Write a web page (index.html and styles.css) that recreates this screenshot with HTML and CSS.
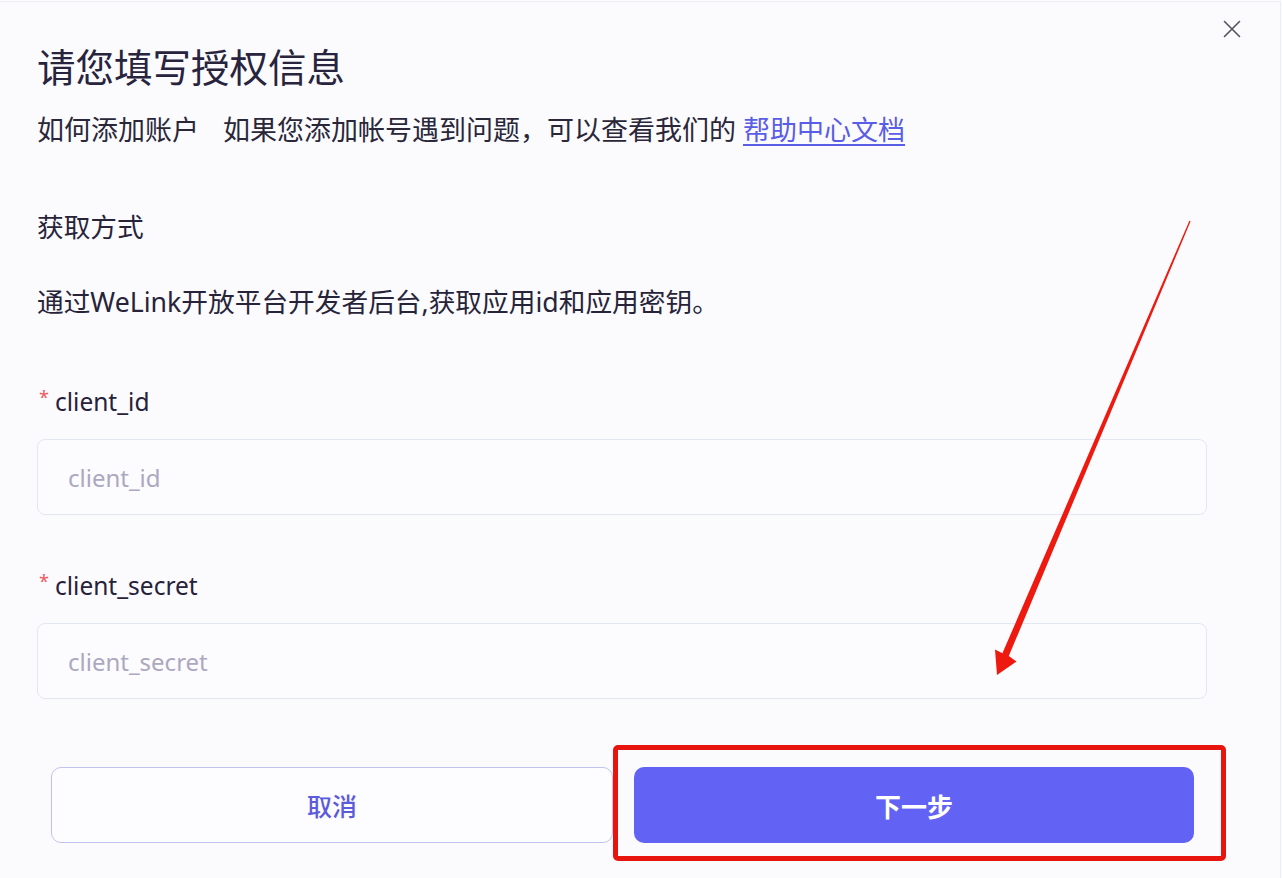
FILE: index.html
```html
<!DOCTYPE html>
<html lang="zh-CN">
<head>
<meta charset="utf-8">
<title>请您填写授权信息</title>
<link rel="stylesheet" href="styles.css">
</head>
<body>
<div class="dialog">
  <button class="close" aria-label="关闭">
    <svg width="18" height="18" viewBox="0 0 18 18"><path d="M1.5 1.5 L16.5 16.5 M16.5 1.5 L1.5 16.5" stroke="#55525f" stroke-width="1.6" fill="none" stroke-linecap="round"/></svg>
  </button>
  <h1 class="title">请您填写授权信息</h1>
  <p class="subtitle"><span class="howto">如何添加账户</span><span>如果您添加帐号遇到问题，可以查看我们的 <a class="link" href="#">帮助中心文档</a></span></p>
  <p class="section">获取方式</p>
  <p class="desc">通过WeLink开放平台开发者后台,获取应用id和应用密钥。</p>
  <form class="form">
    <div class="field">
      <label class="label"><span class="req">*</span>client_id</label>
      <input class="input" type="text" placeholder="client_id">
    </div>
    <div class="field">
      <label class="label"><span class="req">*</span>client_secret</label>
      <input class="input" type="text" placeholder="client_secret">
    </div>
    <div class="actions">
      <button type="button" class="btn cancel">取消</button>
      <button type="button" class="btn primary">下一步</button>
    </div>
  </form>
</div>
<div class="highlight"></div>
<svg class="arrow" width="1282" height="878" viewBox="0 0 1282 878">
  <polygon points="1190.6,221.3 1008.8,656.1 1016.5,661.5 997,675 995,649.5 1002.4,653.3 1189.4,220.7" fill="#ee1a10"/>
</svg>
</body>
</html>
```

FILE: styles.css
```css
* { box-sizing: border-box; }
html, body { margin: 0; padding: 0; }
body {
  width: 1282px;
  height: 878px;
  background: #fbfbfe;
  font-family: "Noto Sans", "Noto Sans CJK SC", sans-serif;
  color: #27243a;
  overflow: hidden;
  position: relative;
}
.dialog {
  position: relative;
  height: 878px;
  padding: 0 73px 0 37px;
  border-top: 1px solid #eceef3;
  border-right: 1px solid #eceef3;
  margin-top: 1px;
  margin-right: 1px;
}
.close {
  position: absolute;
  top: 16px;
  right: 37px;
  width: 22px;
  height: 22px;
  padding: 2px;
  border: 0;
  background: transparent;
  display: flex;
  align-items: center;
  justify-content: center;
}
.title {
  margin: 40px 0 0;
  font-size: 38.5px;
  line-height: 50px;
  font-weight: 400;
  color: #28243d;
}
.subtitle {
  margin: 18px 0 0;
  font-size: 27px;
  line-height: 40px;
  color: #2a2739;
}
.howto { margin-right: 24px; }
.link {
  color: #5a5de6;
  text-decoration: underline;
  text-underline-offset: 4px;
  text-decoration-thickness: 1.5px;
}
.section {
  margin: 57px 0 0;
  font-size: 26.7px;
  line-height: 40px;
}
.desc {
  margin: 35px 0 0;
  font-size: 26.7px;
  line-height: 40px;
}
.form {
  display: flex;
  flex-direction: column;
  margin-top: 60px;
}
.field {
  display: flex;
  flex-direction: column;
  gap: 17px;
}
.field + .field { margin-top: 51px; }
.label {
  font-size: 24.5px;
  line-height: 40px;
  color: #27213a;
  display: flex;
  align-items: flex-start;
}
.req {
  color: #f0585c;
  font-size: 18px;
  line-height: 30px;
  width: 18px;
  padding-left: 2px;
}
.input {
  height: 76px;
  width: 100%;
  border: 1px solid #e3e6f3;
  border-radius: 8px;
  background: #fcfcff;
  padding: 0 30px;
  font-family: "Noto Sans", "Noto Sans CJK SC", sans-serif;
  font-size: 24px;
  color: #27243a;
  outline: none;
}
.input::placeholder { color: #aca8c0; }
.actions {
  display: flex;
  gap: 21px;
  margin: 68px 13px 0 14px;
}
.btn {
  flex: 1;
  height: 76px;
  border-radius: 10px;
  font-family: "Noto Sans CJK SC", sans-serif;
  font-size: 25px;
  cursor: pointer;
}
.cancel {
  background: #fdfdff;
  border: 1px solid #bfc4ee;
  color: #5c5bdc;
  font-weight: 500;
}
.primary {
  background: #6262f5;
  border: 0;
  color: #ffffff;
  font-weight: 700;
  font-size: 26px;
}
.highlight {
  position: absolute;
  left: 613px;
  top: 745px;
  width: 613px;
  height: 116px;
  border: 5px solid #e8150f;
  border-radius: 5px;
  pointer-events: none;
}
.arrow {
  position: absolute;
  left: 0;
  top: 0;
  pointer-events: none;
}
```
